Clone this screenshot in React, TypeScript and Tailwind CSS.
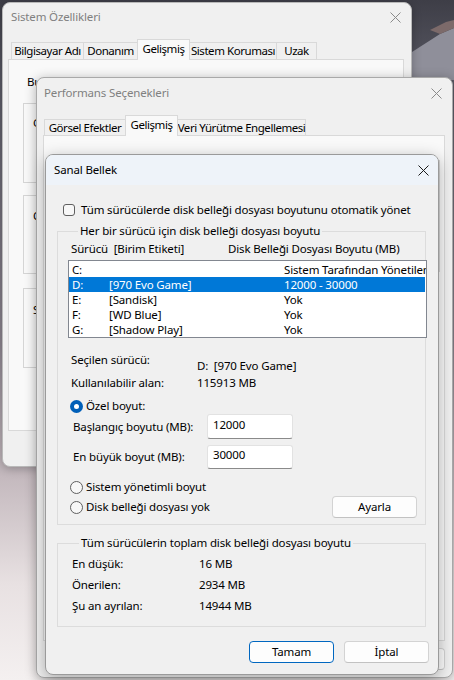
import React from 'react';

const font = "font-['Noto_Sans',sans-serif] text-[11.5px] leading-[16px] tracking-[-0.15px]";

function CloseX({ active }: { active?: boolean }) {
    return (
        <svg width="11" height="11" viewBox="0 0 11 11" className="shrink-0">
            <path
                d="M0.5 0.5 L10.5 10.5 M10.5 0.5 L0.5 10.5"
                stroke={active ? '#1a1a1a' : '#8a8a8a'}
                strokeWidth="1"
                fill="none"
            />
        </svg>
    );
}

function Radio({ checked }: { checked?: boolean }) {
    if (checked) {
        return (
            <span className="w-[13px] h-[13px] rounded-full bg-[#005fb8] flex items-center justify-center shrink-0">
                <span className="w-[5px] h-[5px] rounded-full bg-white" />
            </span>
        );
    }
    return <span className="w-[13px] h-[13px] rounded-full border border-[#5f5f5f] bg-[#f7f7f7] shrink-0" />;
}

function Button({ label, primary, className }: { label: string; primary?: boolean; className?: string }) {
    return (
        <div
            className={
                'h-[22px] w-[85px] shrink-0 rounded-[4px] bg-[#fdfdfd] flex items-center justify-center text-black ' +
                (primary ? 'border border-[#0067c0] ' : 'border border-[#d3d3d3] border-b-[#c2c2c2] ') +
                (className || '')
            }
        >
            {label}
        </div>
    );
}

type Tab = { label: string; cls: string };

function TabRow({ tabs, active, unselH, className }: { tabs: Tab[]; active: number; unselH: string; className: string }) {
    return (
        <div className={'relative z-10 flex items-end h-[20px] whitespace-nowrap tracking-[-0.45px] ' + className}>
            {tabs.map((t, i) => (
                <div
                    key={t.label}
                    className={
                        'flex justify-center shrink-0 border border-[#d9d9d9] border-b-0 ' +
                        t.cls +
                        (i > 0 ? ' -ml-px' : '') +
                        (i === active
                            ? ' h-[21px] -mb-px bg-[#f9f9f9] items-start pt-[1px] relative z-10'
                            : ' bg-[#f0f0f0] items-center ' + unselH)
                    }
                >
                    {t.label}
                </div>
            ))}
        </div>
    );
}

function Drive({ d, label, size, sel }: { d: string; label: string; size: string; sel?: boolean }) {
    return (
        <div
            className={
                'grid grid-cols-[37px_175px_1fr] h-[15px] leading-[15px] pl-[3px] mr-px whitespace-nowrap ' +
                (sel ? 'bg-[#0078d7] text-white' : 'text-black')
            }
        >
            <span>{d}</span>
            <span>{label}</span>
            <span>{size}</span>
        </div>
    );
}

function SystemProperties() {
    const tabs: Tab[] = [
        { label: 'Bilgisayar Adı', cls: 'w-[73px]' },
        { label: 'Donanım', cls: 'w-[55px]' },
        { label: 'Gelişmiş', cls: 'w-[53px]' },
        { label: 'Sistem Koruması', cls: 'w-[88px]' },
        { label: 'Uzak', cls: 'w-[41px]' },
    ];
    return (
        <div className="absolute left-[2px] top-[2px] w-[410px] h-[465px] rounded-[8px] bg-[#f0f0f0] border border-[#b9b9b9] shadow-[0_2px_10px_rgba(0,0,0,0.25)] flex flex-col">
            <div className="h-[28px] flex items-center justify-between pl-[8px] pr-[10px] text-[#808080]">
                <span>Sistem Özellikleri</span>
                <CloseX />
            </div>
            <TabRow tabs={tabs} active={2} unselH="h-[17px]" className="mt-[8px] ml-[8px]" />
            <div className="ml-[5px] w-[396px] h-[372px] border border-[#d9d9d9] bg-[#f9f9f9] pt-[14px] pl-[14px] pr-[14px]">
                <div className="ml-[4px] whitespace-nowrap">
                    Bu değişikliklerin çoğunu yapmak için Yönetici olarak oturum açmanız gerekir.
                </div>
                <fieldset className="mt-[5px] min-w-0 border border-[#d5d5d5] pl-[9px]">
                    <legend className="ml-[6px] px-[2px]">Performans</legend>
                    <div className="h-[71px] pt-[4px] whitespace-nowrap">
                        Görsel efektler, işlemci zamanlaması, bellek kullanımı ve sanal bellek
                    </div>
                </fieldset>
                <fieldset className="mt-[4px] min-w-0 border border-[#d5d5d5] pl-[9px]">
                    <legend className="ml-[6px] px-[2px]">Kullanıcı Profilleri</legend>
                    <div className="h-[70px] pt-[5px] whitespace-nowrap">Oturum açma ile ilgili masaüstü ayarları</div>
                </fieldset>
                <fieldset className="mt-[6px] min-w-0 border border-[#d5d5d5] pl-[9px]">
                    <legend className="ml-[6px] px-[2px]">Başlangıç ve Kurtarma</legend>
                    <div className="h-[71px] pt-[6px] whitespace-nowrap">
                        Sistem başlangıcı, sistem hatası ve hata ayıklama bilgileri
                    </div>
                </fieldset>
            </div>
        </div>
    );
}

function PerformanceOptions() {
    const tabs: Tab[] = [
        { label: 'Görsel Efektler', cls: 'w-[82px]' },
        { label: 'Gelişmiş', cls: 'w-[53px]' },
        { label: 'Veri Yürütme Engellemesi', cls: 'w-[129px]' },
    ];
    return (
        <div className="absolute left-[36px] top-[77px] w-[417px] h-[601px] rounded-[8px] bg-[#f0f0f0] border border-[#a9a9a9] shadow-[0_2px_12px_rgba(0,0,0,0.3)] flex flex-col">
            <div className="h-[30px] flex items-center justify-between pl-[7px] pr-[10px] text-[#808080]">
                <span>Performans Seçenekleri</span>
                <CloseX />
            </div>
            <TabRow tabs={tabs} active={1} unselH="h-[16px]" className="mt-[7px] ml-[7px]" />
            <div className="ml-[6px] w-[402px] h-[506px] border border-[#d9d9d9] bg-[#f9f9f9] pt-[16px] px-[4px]">
                <fieldset className="min-w-0 border border-[#d5d5d5] pl-[9px] h-[120px]">
                    <legend className="ml-[6px] px-[2px]">İşlemci zamanlaması</legend>
                </fieldset>
            </div>
            <div className="flex justify-end gap-[10px] mt-[7px] pr-[7px]">
                <Button label="Tamam" />
                <Button label="İptal" />
                <Button label="Uygula" />
            </div>
        </div>
    );
}

function VirtualMemory() {
    return (
        <div className="absolute left-[45px] top-[154px] w-[394px] h-[521px] rounded-[8px] bg-[#f0f0f0] border border-[#9a9a9a] shadow-[0_4px_16px_rgba(0,0,0,0.3)] overflow-hidden flex flex-col">
            <div className="h-[30px] shrink-0 bg-[#eef3f9] flex items-center justify-between pl-[8px] pr-[9px] text-black">
                <span>Sanal Bellek</span>
                <CloseX active />
            </div>
            <div className="pl-[11px] pr-[12px] text-black">
                <div className="mt-[17px] h-[16px] flex items-center gap-[6px] pl-[6px] whitespace-nowrap">
                    <span className="w-[12px] h-[12px] rounded-[3px] border border-[#5f5f5f] bg-[#f7f7f7] shrink-0" />
                    <span>Tüm sürücülerde disk belleği dosyası boyutunu otomatik yönet</span>
                </div>

                <fieldset className="mt-[5px] min-w-0 border border-[#dcdcdc] pl-[13px] pr-[8px] pb-[6px]">
                    <legend className="ml-[7px] px-[2px]">Her bir sürücü için disk belleği dosyası boyutu</legend>
                    <div className="mt-[2px] h-[16px] flex whitespace-nowrap">
                        <span className="w-[157px]">Sürücü&nbsp;&nbsp;[Birim Etiketi]</span>
                        <span>Disk Belleği Dosyası Boyutu (MB)</span>
                    </div>
                    <div className="mt-[3px] -ml-[3px] w-[359px] h-[78px] border border-[#828790] bg-white pt-px overflow-hidden">
                        <Drive d="C:" label="" size="Sistem Tarafından Yönetilen" />
                        <Drive d="D:" label="[970 Evo Game]" size="12000 - 30000" sel />
                        <Drive d="E:" label="[Sandisk]" size="Yok" />
                        <Drive d="F:" label="[WD Blue]" size="Yok" />
                        <Drive d="G:" label="[Shadow Play]" size="Yok" />
                    </div>
                    <div className="mt-[14px] flex items-start">
                        <span className="w-[126px]">Seçilen sürücü:</span>
                        <span className="pt-[6px]">D:&nbsp;&nbsp;[970 Evo Game]</span>
                    </div>
                    <div className="mt-px flex">
                        <span className="w-[126px]">Kullanılabilir alan:</span>
                        <span>115913 MB</span>
                    </div>
                    <div className="mt-[7px] h-[16px] -ml-px flex items-center gap-[3px]">
                        <Radio checked />
                        <span>Özel boyut:</span>
                    </div>
                    <div className="flex items-center">
                        <span className="w-[136px] pl-[2px]">Başlangıç boyutu (MB):</span>
                        <div className="w-[86px] h-[25px] bg-white border border-[#e2e2e2] border-b-[#8a8a8a] rounded-[3px] pl-[5px] pt-[2px]">
                            12000
                        </div>
                    </div>
                    <div className="mt-[6px] flex items-center">
                        <span className="w-[136px] pl-[2px]">En büyük boyut (MB):</span>
                        <div className="w-[86px] h-[24px] bg-white border border-[#e2e2e2] border-b-[#8a8a8a] rounded-[3px] pl-[5px] pt-[1px]">
                            30000
                        </div>
                    </div>
                    <div className="mt-[10px] h-[16px] -ml-px flex items-center gap-[3px]">
                        <Radio />
                        <span>Sistem yönetimli boyut</span>
                    </div>
                    <div className="mt-px h-[22px] flex items-center justify-between">
                        <div className="-ml-px flex items-center gap-[3px]">
                            <Radio />
                            <span>Disk belleği dosyası yok</span>
                        </div>
                        <Button label="Ayarla" />
                    </div>
                </fieldset>

                <fieldset className="mt-[10px] min-w-0 border border-[#dcdcdc] pl-[14px] pb-[10px]">
                    <legend className="ml-[7px] px-[2px]">Tüm sürücülerin toplam disk belleği dosyası boyutu</legend>
                    <div className="mt-[2px] flex h-[21px] leading-[21px]">
                        <span className="w-[127px]">En düşük:</span>
                        <span>16 MB</span>
                    </div>
                    <div className="flex h-[21px] leading-[21px]">
                        <span className="w-[127px]">Önerilen:</span>
                        <span>2934 MB</span>
                    </div>
                    <div className="flex h-[21px] leading-[21px]">
                        <span className="w-[127px]">Şu an ayrılan:</span>
                        <span>14944 MB</span>
                    </div>
                </fieldset>

                <div className="mt-[14px] -mr-[3px] flex justify-end gap-[10px]">
                    <Button label="Tamam" primary />
                    <Button label="İptal" />
                </div>
            </div>
        </div>
    );
}

function Wallpaper() {
    return (
        <svg className="absolute inset-0" width="454" height="680" viewBox="0 0 454 680">
            <defs>
                <linearGradient id="wp" x1="0" y1="0" x2="0" y2="1">
                    <stop offset="0" stopColor="#3e3e47" />
                    <stop offset="0.12" stopColor="#595964" />
                    <stop offset="0.5" stopColor="#8a838d" />
                    <stop offset="0.7" stopColor="#c4b9be" />
                    <stop offset="0.86" stopColor="#e8e1e2" />
                    <stop offset="1" stopColor="#f4f0f0" />
                </linearGradient>
            </defs>
            <rect width="454" height="680" fill="url(#wp)" />
            <polygon points="412,52 440,34 454,28 454,80 412,80" fill="#8f8f9a" />
            <polygon points="430,30 446,22 454,20 454,28 440,34" fill="#7c6a6a" />
        </svg>
    );
}

export default function App() {
    return (
        <div className={'relative w-[454px] h-[680px] overflow-hidden text-black ' + font}>
            <Wallpaper />
            <SystemProperties />
            <PerformanceOptions />
            <VirtualMemory />
        </div>
    );
}
